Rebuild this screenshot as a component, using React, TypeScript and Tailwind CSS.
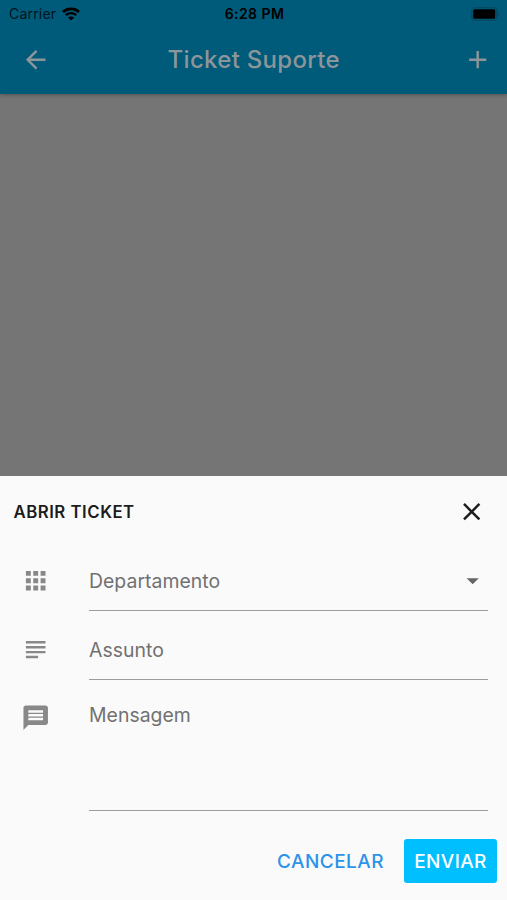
import React from 'react';
import clsx from 'clsx';

interface IconProps {
  path: string;
  className?: string;
}

const ICONS = {
  back: 'M20 11H7.83l5.59-5.59L12 4l-8 8 8 8 1.41-1.41L7.83 13H20v-2z',
  add: 'M19 13h-6v6h-2v-6H5v-2h6V5h2v6h6v2z',
  close:
    'M19 6.41L17.59 5 12 10.59 6.41 5 5 6.41 10.59 12 5 17.59 6.41 19 12 13.41 17.59 19 19 17.59 13.41 12z',
  apps: 'M4 8h4V4H4v4zm6 12h4v-4h-4v4zm-6 0h4v-4H4v4zm0-6h4v-4H4v4zm6 0h4v-4h-4v4zm6-10v4h4V4h-4zm-6 4h4V4h-4v4zm6 6h4v-4h-4v4zm0 6h4v-4h-4v4z',
  subject: 'M14 17H4v2h10v-2zm6-8H4v2h16V9zM4 15h16v-2H4v2zM4 5v2h16V5H4z',
  message:
    'M20 2H4c-1.1 0-1.99.9-1.99 2L2 22l4-4h14c1.1 0 2-.9 2-2V4c0-1.1-.9-2-2-2zm-2 12H6v-2h12v2zm0-3H6V9h12v2zm0-3H6V6h12v2z',
  dropdown: 'M7 10l5 5 5-5z',
};

const Icon: React.FC<IconProps> = ({ path, className }) => (
  <svg viewBox="0 0 24 24" fill="currentColor" className={clsx('block size-[29.4px] shrink-0', className)}>
    <path d={path} />
  </svg>
);

const StatusBar: React.FC = () => (
  <div className="grid h-[27px] grid-cols-3 items-center pr-[7px] pl-[9px] text-[#00131a]">
    <div className="flex items-center gap-[6px]">
      <span className="text-[14px] tracking-[0.2px]">Carrier</span>
      <svg viewBox="0 0 18 14" className="block h-[14px] w-[18px]" fill="none" stroke="#000">
        <path d="M1 5C5.4 .9 12.6 .9 17 5" strokeWidth="2.8" />
        <path d="M3.8 8.2C6.8 5.4 11.2 5.4 14.2 8.2" strokeWidth="2.3" />
        <path d="M9 13.5L5.9 10.5C7.6 9 10.4 9 12.1 10.5Z" fill="#000" stroke="none" />
      </svg>
    </div>
    <span className="text-center text-[14px] font-semibold tracking-[0.45px] text-black">6:28 PM</span>
    <svg viewBox="0 0 29 14" className="block h-[14px] w-[29px] justify-self-end">
      <rect x=".7" y=".7" width="25" height="12.6" rx="3.5" fill="none" stroke="#004a63" strokeWidth="1.3" />
      <rect x="2.2" y="2.2" width="22" height="9.6" rx="1.5" fill="#000" />
      <path d="M27 4.8c1.6.8 1.6 3.6 0 4.4z" fill="#004a63" />
    </svg>
  </div>
);

interface FieldRowProps {
  icon: string;
  label: string;
  className: string;
  iconClassName?: string;
  trailing?: React.ReactNode;
}

const FieldRow: React.FC<FieldRowProps> = ({ icon, label, className, iconClassName, trailing }) => (
  <div className={clsx('flex pr-[19.5px] pl-[20.5px]', className)}>
    <Icon path={icon} className={clsx('text-[#888888]', iconClassName)} />
    <div className="ml-[39.1px] flex flex-1 items-start justify-between border-b-[1.3px] border-[#9c9c9c]">
      <span className="text-[19.4px] leading-[31px] tracking-[0.04px] text-[#717171]">{label}</span>
      {trailing}
    </div>
  </div>
);

const App: React.FC = () => (
  <div className="flex h-[900px] w-[507px] flex-col overflow-hidden bg-[#757575] font-['Inter',sans-serif]">
    <header className="h-[94px] shrink-0 bg-[#005a79] shadow-[0_1px_4px_rgba(0,0,0,0.3)]">
      <StatusBar />
      <div className="flex h-[65px] items-center justify-between pr-[15px] pl-[20.5px] text-[#8c9599]">
        <button aria-label="Voltar">
          <Icon path={ICONS.back} />
        </button>
        <h1 className="mr-[5px] text-[24px] font-medium tracking-[0.3px]">Ticket Suporte</h1>
        <button aria-label="Adicionar">
          <Icon path={ICONS.add} />
        </button>
      </div>
    </header>

    <main className="flex-1" />

    <section className="flex h-[424px] shrink-0 flex-col bg-[#fafafa]">
      <div className="flex h-[71px] items-center justify-between pr-[21px] pl-[13.5px] text-[#1c1c1c]">
        <h2 className="pt-[2px] text-[16.8px] font-semibold tracking-[0.5px]">ABRIR TICKET</h2>
        <button aria-label="Fechar">
          <Icon path={ICONS.close} />
        </button>
      </div>

      {/* Form fields */}
      <FieldRow
        icon={ICONS.apps}
        label="Departamento"
        className="mt-[19px] h-[45px]"
        trailing={<Icon path={ICONS.dropdown} className="text-[#666666]" />}
      />
      <FieldRow icon={ICONS.subject} label="Assunto" className="mt-[24px] h-[44.5px]" />
      <FieldRow
        icon={ICONS.message}
        label="Mensagem"
        className="mt-[20px] h-[111.5px]"
        iconClassName="mt-[3px]"
      />

      <div className="mt-[28px] flex h-11 items-center justify-end gap-[20px] pr-[10px] text-[19px] font-medium">
        <button className="pt-[2px] tracking-[0.45px] text-[#2b93e8]">CANCELAR</button>
        <button className="h-11 w-[93px] rounded-[3px] bg-[#00bfff] pt-[2px] tracking-[0.35px] text-white">
          ENVIAR
        </button>
      </div>
    </section>
  </div>
);

export default App;
